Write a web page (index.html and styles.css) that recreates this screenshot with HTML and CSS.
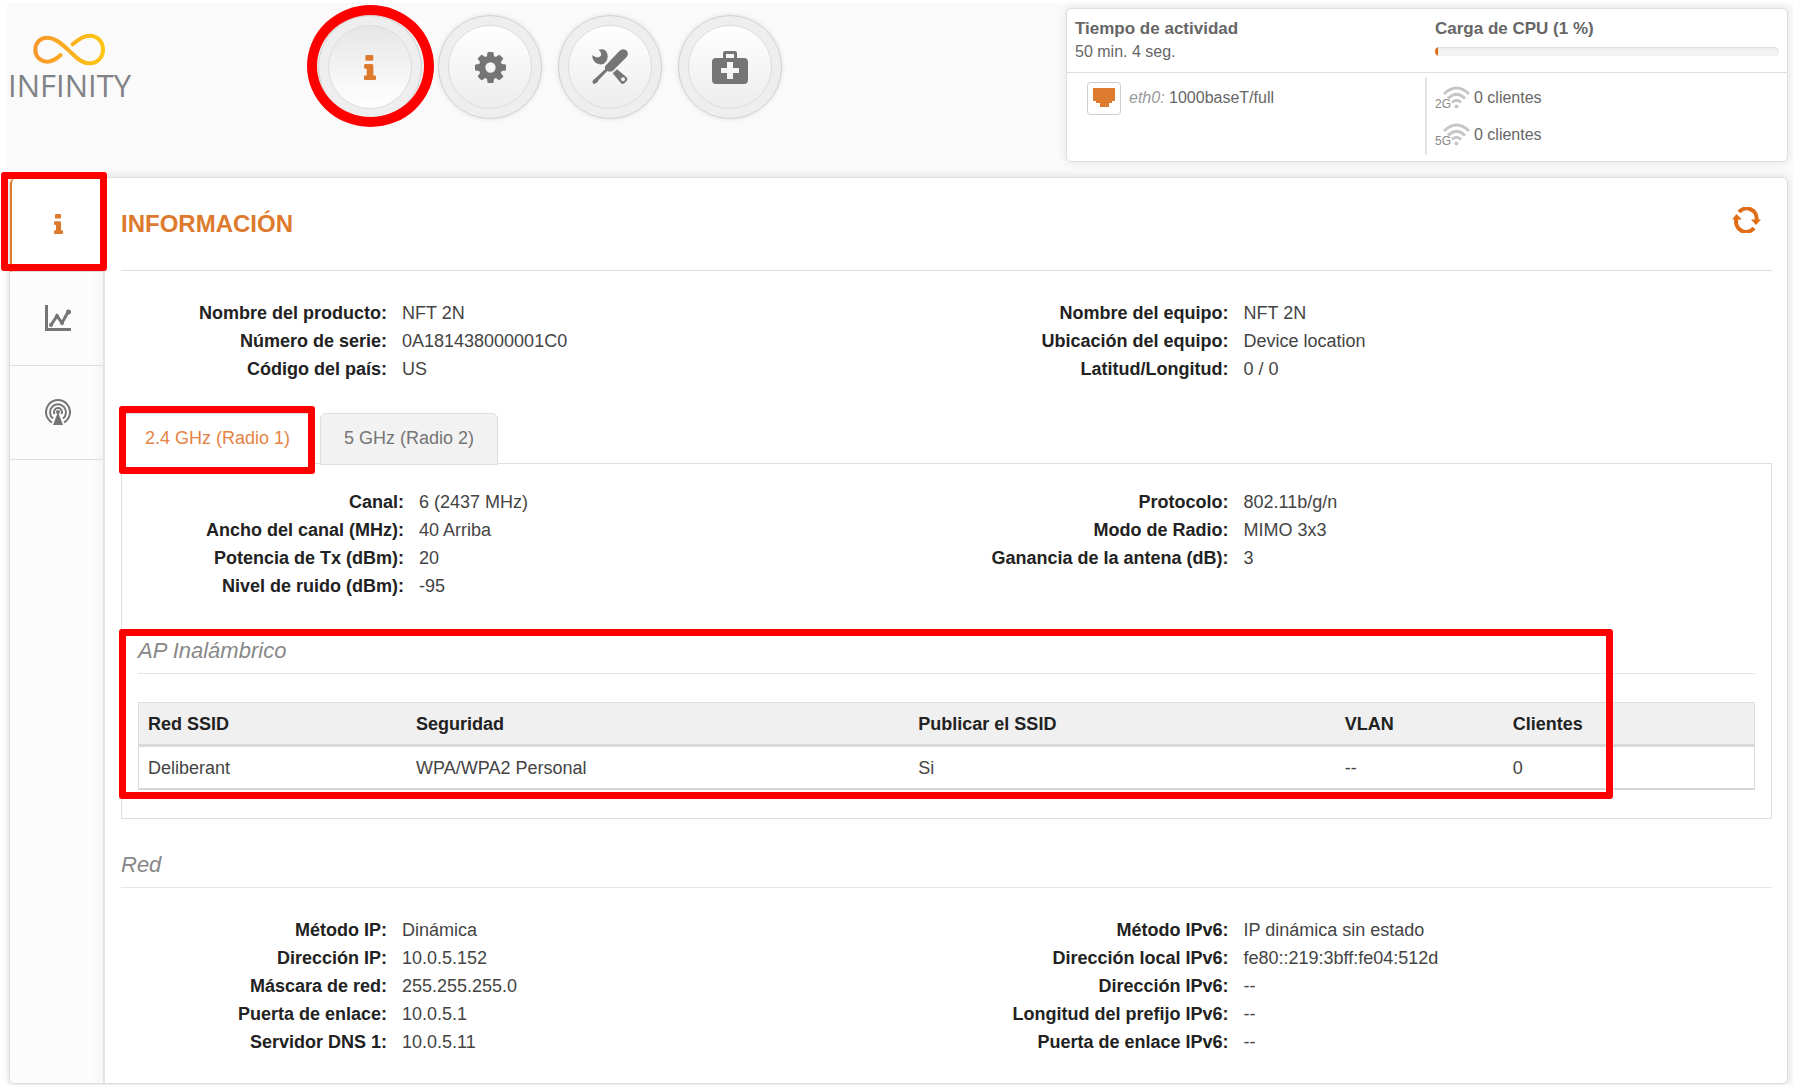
FILE: index.html
```html
<!DOCTYPE html>
<html lang="es">
<head>
<meta charset="utf-8">
<title>Infinity - Información</title>
<link rel="stylesheet" href="styles.css">
</head>
<body>
<svg class="defs" aria-hidden="true">
  <symbol id="info" viewBox="64 128 576 1408" preserveAspectRatio="none"><path d="M640 1344v128q0 26-19 45t-45 19h-448q-26 0-45-19t-19-45v-128q0-26 19-45t45-19h64v-384h-64q-26 0-45-19t-19-45v-128q0-26 19-45t45-19h320q26 0 45 19t19 45v576h64q26 0 45 19t19 45zm-128-1152v192q0 26-19 45t-45 19h-256q-26 0-45-19t-19-45v-192q0-26 19-45t45-19h256q26 0 45 19t19 45z"/></symbol>
  <symbol id="wifi" viewBox="0 0 27 23"><g fill="none" stroke="#c6c6c6" stroke-width="3"><path d="M1 8Q13.500-4 26 8"/><path d="M5 12.500Q13.500 4 22 12.500"/><path d="M9 16.500Q13.500 12 18 16.500"/></g><circle cx="13.500" cy="20.500" r="2" fill="#c6c6c6"/></symbol>
</svg>
<div class="page">
  <header class="top">
    <a class="logo" href="#" aria-label="Infinity">
      <svg width="72" height="34" viewBox="0 0 216 102" aria-hidden="true">
        <defs><linearGradient id="gold"><stop offset="0" stop-color="#f7982a"/><stop offset="1" stop-color="#fdc513"/></linearGradient></defs>
        <path d="M83 66C66 82 54 86 42 86C22 86 7 70 7 50C7 29 22 14 42 14C66 14 86 33 106 51C126 69 143 91 170 91C193 91 210 73 210 50C210 26 193 8 170 8C152 8 138 17 119 34" fill="none" stroke="url(#gold)" stroke-width="12" stroke-linecap="round"/>
      </svg>
      <span>INFINITY</span>
    </a>
    <nav class="circles" aria-label="Principal">
      <a class="circle active" href="#" aria-label="Información"><span><svg width="12" height="25"><use href="#info"/></svg></span></a>
      <a class="circle" href="#" aria-label="Configuración"><span><svg width="31" height="31" viewBox="128 128 1536 1536"><path d="M1152 896q0-106-75-181t-181-75-181 75-75 181 75 181 181 75 181-75 75-181zm512-109v222q0 12-8 23t-20 13l-185 28q-19 54-39 91 35 50 107 138 10 12 10 25t-9 23q-27 37-99 108t-94 71q-12 0-26-9l-138-108q-44 23-91 38-16 136-29 186-7 28-36 28h-222q-14 0-24.500-8.500t-11.500-21.500l-28-184q-49-16-90-37l-141 107q-10 9-25 9-14 0-25-11-126-114-165-168-7-10-7-23 0-12 8-23 15-21 51-66.500t54-70.500q-27-50-41-99l-183-27q-13-2-21-12.500t-8-23.500v-222q0-12 8-23t19-13l186-28q14-46 39-92-40-57-107-138-10-12-10-24 0-10 9-23 26-36 98.500-107.500t94.500-71.500q13 0 26 10l138 107q44-23 91-38 16-136 29-186 7-28 36-28h222q14 0 24.500 8.500t11.500 21.500l28 184q49 16 90 37l142-107q9-9 24-9 13 0 25 10 129 119 165 170 7 8 7 22 0 12-8 23-15 21-51 66.500t-54 70.500q26 50 41 98l183 28q13 2 21 12.500t8 23.500z"/></svg></span></a>
      <a class="circle" href="#" aria-label="Herramientas"><span><svg width="36" height="36" viewBox="0 0 108 108">
        <path d="M1 19L13 25Q23 27 28 18Q28 8 20 2Q40-3 46 14Q49 28 43 37L35 45Q23 49 12 42Q0 33 1 19Z"/>
        <path d="M39 52L82 6Q91-3 103 4Q112 14 104 24L62 66Q52 69 46 66L20 93Q16 103 5 105Q-1 101 3 94L12 86L39 61Z"/>
        <path fill-rule="evenodd" d="M62 73L75 61L103 84Q109 89 103 97L97 103Q91 107 86 101ZM87 91A6 6 0 1 0 99 91A6 6 0 1 0 87 91Z"/>
      </svg></span></a>
      <a class="circle" href="#" aria-label="Asistencia"><span><svg width="36" height="34" viewBox="0 0 36 34"><path fill-rule="evenodd" d="M11 8V3Q11 1 13 1H23Q25 1 25 3V8H32Q36 8 36 12V30Q36 34 32 34H4Q0 34 0 30V12Q0 8 4 8ZM14 8H22V4H14ZM15 12V18H9V23H15V29H21V23H27V18H21V12Z"/></svg></span></a>
    </nav>
    <section class="status" aria-label="Estado">
      <div class="status-row">
        <div><b>Tiempo de actividad</b><p>50 min. 4 seg.</p></div>
        <div><b>Carga de CPU (1 %)</b><div class="bar"><i style="width:1%"></i></div></div>
      </div>
      <div class="status-row links">
        <div class="eth">
          <svg width="34" height="33" viewBox="0 0 34 33" aria-hidden="true"><rect x=".5" y=".5" width="33" height="32" rx="3" fill="#fff" stroke="#ccc"/><path d="M6 6H28V19H25V21H22V25H13V21H9V19H6Z" fill="#dd7a2e"/></svg>
          <p><em>eth0:</em> 1000baseT/full</p>
        </div>
        <div class="clients">
          <p><span class="band"><svg width="27" height="23" aria-hidden="true"><use href="#wifi"/></svg><small>2G</small></span>0 clientes</p>
          <p><span class="band"><svg width="27" height="23" aria-hidden="true"><use href="#wifi"/></svg><small>5G</small></span>0 clientes</p>
        </div>
      </div>
    </section>
  </header>

  <div class="panel">
    <nav class="side" aria-label="Secciones">
      <a class="active" href="#" aria-label="Información"><svg width="9" height="20"><use href="#info"/></svg></a>
      <a href="#" aria-label="Estadísticas"><svg width="26" height="26" viewBox="0 0 26 26"><path d="M1.500 0V24.500H26" fill="none" stroke="#757575" stroke-width="3"/><path d="M6 20L12 11L17 18L23 7" fill="none" stroke="#757575" stroke-width="3"/><circle cx="6" cy="20" r="2"/><circle cx="12" cy="11" r="2"/><circle cx="17" cy="18" r="2"/><circle cx="23.500" cy="7" r="2.500"/></svg></a>
      <a href="#" aria-label="Inalámbrico"><svg width="26" height="26" viewBox="0 0 26 26"><g fill="none" stroke="#757575" stroke-width="2"><path d="M7 23.500A12 12 0 1 1 19 23.500"/><path d="M8 19.500A8 8 0 1 1 18 19.500"/><path d="M9.500 15A4 4 0 1 1 16.500 15"/></g><circle cx="13" cy="13" r="2"/><path d="M13 13L18 26H8Z"/></svg></a>
    </nav>
    <main class="content">
      <div class="title">
        <h1>INFORMACIÓN</h1>
        <button class="refresh" type="button" aria-label="Actualizar"><svg width="29" height="26" viewBox="0 0 29 26"><g fill="none" stroke="#df6d16" stroke-width="4"><path d="M7 5A10 10 0 0 1 24.500 13"/><path d="M22 21A10 10 0 0 1 4.500 12"/></g><path d="M19 12.500H29L24 18ZM0 12.500H10L4.500 7Z" fill="#df6d16"/></svg></button>
      </div>
      <div class="facts">
        <dl><dt>Nombre del producto:</dt><dd>NFT 2N</dd><dt>Número de serie:</dt><dd>0A181438000001C0</dd><dt>Código del país:</dt><dd>US</dd></dl>
        <dl><dt>Nombre del equipo:</dt><dd>NFT 2N</dd><dt>Ubicación del equipo:</dt><dd>Device location</dd><dt>Latitud/Longitud:</dt><dd>0 / 0</dd></dl>
      </div>
      <div class="tabs">
        <button class="active" type="button">2.4 GHz (Radio 1)</button>
        <button type="button">5 GHz (Radio 2)</button>
      </div>
      <section class="radio">
        <div class="facts">
          <dl><dt>Canal:</dt><dd>6 (2437 MHz)</dd><dt>Ancho del canal (MHz):</dt><dd>40 Arriba</dd><dt>Potencia de Tx (dBm):</dt><dd>20</dd><dt>Nivel de ruido (dBm):</dt><dd>-95</dd></dl>
          <dl><dt>Protocolo:</dt><dd>802.11b/g/n</dd><dt>Modo de Radio:</dt><dd>MIMO 3x3</dd><dt>Ganancia de la antena (dB):</dt><dd>3</dd></dl>
        </div>
        <div class="ap">
          <h2>AP Inalámbrico</h2>
          <table>
            <colgroup><col class="c-ssid"><col class="c-sec"><col class="c-pub"><col class="c-vlan"><col></colgroup>
            <thead><tr><th>Red SSID</th><th>Seguridad</th><th>Publicar el SSID</th><th>VLAN</th><th>Clientes</th></tr></thead>
            <tbody><tr><td>Deliberant</td><td>WPA/WPA2 Personal</td><td>Si</td><td>--</td><td>0</td></tr></tbody>
          </table>
        </div>
      </section>
      <section class="net">
        <h2>Red</h2>
        <div class="facts">
          <dl><dt>Método IP:</dt><dd>Dinámica</dd><dt>Dirección IP:</dt><dd>10.0.5.152</dd><dt>Máscara de red:</dt><dd>255.255.255.0</dd><dt>Puerta de enlace:</dt><dd>10.0.5.1</dd><dt>Servidor DNS 1:</dt><dd>10.0.5.11</dd></dl>
          <dl><dt>Método IPv6:</dt><dd>IP dinámica sin estado</dd><dt>Dirección local IPv6:</dt><dd>fe80::219:3bff:fe04:512d</dd><dt>Dirección IPv6:</dt><dd>--</dd><dt>Longitud del prefijo IPv6:</dt><dd>--</dd><dt>Puerta de enlace IPv6:</dt><dd>--</dd></dl>
        </div>
      </section>
    </main>
  </div>
</div>
</body>
</html>
```
FILE: styles.css
```css
* { box-sizing: border-box; }
body {
  margin: 0;
  background: #fff;
  color: #444;
  font: 18px/28px "Liberation Sans", Arial, sans-serif;
}
h1, h2, p, dl, dd { margin: 0; }
a { color: inherit; text-decoration: none; }
svg { display: block; fill: currentColor; }
.defs { position: absolute; width: 0; height: 0; }
.page {
  margin: 3px 0 0 7px;
  padding: 5px 5px 2px 1px;
  background: #fafafa;
}

/* Header */
.top { display: flex; align-items: flex-start; margin-bottom: 15px; }
.logo { flex: 0 0 310px; padding: 25px 0 0; color: #808285; }
.logo svg { margin-left: 25px; }
.logo span { display: block; font: 31px/36px "Open Sans", sans-serif; }
.circles { display: flex; flex: 1; gap: 16px; padding-top: 7px; }
.circle {
  position: relative;
  display: flex;
  width: 104px;
  height: 104px;
  padding: 9px;
  border: 1px solid #d2d2d2;
  border-radius: 50%;
  background: #eee;
  color: #757575;
  box-shadow: 0 0 5px rgba(0, 0, 0, .1);
}
.circle span {
  display: flex;
  flex: 1;
  align-items: center;
  justify-content: center;
  border: 1px solid #ddd;
  border-radius: 50%;
  background: linear-gradient(#fff, #ededed);
}
.circle.active { color: #dd7a2e; }
.circle.active span { background: linear-gradient(#e6e6e6, #fff); }

/* Red callouts laid over the highlighted controls */
.circle.active::after, .side .active::after, .tabs .active::after, .ap::after {
  content: "";
  position: absolute;
  z-index: 2;
  border: 7px solid #f00;
  border-radius: 3px;
  pointer-events: none;
}
.circle.active::after { inset: -11px -13px -9px -12px; border-width: 10px; border-radius: 50%; }
.side .active::after { inset: -6px -4px 0 -11px; }
.tabs .active::after { inset: -8px -2px -10px -3px; }
.ap::after { inset: -8px 142px -9px -19px; }

.status {
  width: 722px;
  border: 1px solid #dedede;
  border-radius: 5px;
  background: #fff;
  box-shadow: 0 0 10px rgba(0, 0, 0, .1);
  color: #666;
  font-size: 16px;
  line-height: 23px;
}
.status-row { display: grid; grid-template-columns: 1fr 1fr; }
.status-row > div { padding: 8px 8px 9px; }
.status-row b { display: block; font-size: 17px; }
.links { border-top: 1px solid #dedede; }
.bar {
  height: 9px;
  margin-top: 7px;
  overflow: hidden;
  border-radius: 5px;
  background: #f2f2f2;
  box-shadow: inset 0 1px 2px rgba(0, 0, 0, .1);
}
.bar i { display: block; height: 9px; background: #df6d16; }
.links .eth { display: flex; gap: 8px; padding: 9px 20px; }
.eth p { line-height: 32px; }
.eth em { color: #999; }
.links .clients { margin: 4px 0 6px -2px; padding: 2px 8px; border-left: 2px solid #e3e3e3; }
.clients p { display: flex; align-items: center; height: 37px; }
.band { position: relative; padding: 0 4px 0 8px; }
.band small { position: absolute; left: 0; bottom: -1px; color: #888; font-size: 12px; line-height: 12px; }

/* Main panel */
.panel {
  display: flex;
  margin-left: 1px;
  border: 1px solid #dedede;
  border-radius: 6px;
  background: #fff;
  box-shadow: 0 0 10px rgba(0, 0, 0, .12);
}
.side {
  flex: 0 0 95px;
  border-right: 2px solid #e3e3e3;
  border-radius: 6px 0 0 6px;
  background: linear-gradient(90deg, #fcfcfc 88%, #f6f6f6);
  color: #757575;
}
.side a {
  position: relative;
  display: flex;
  align-items: center;
  justify-content: center;
  height: 94px;
  padding: 0 0 2px 2px;
  border-bottom: 1px solid #dedede;
}
.side .active { border-left: 2px solid #dd7a2e; border-top-left-radius: 6px; background: #fff; color: #dd7a2e; }
.content { flex: 1; min-width: 0; padding: 0 15px 27px 16px; }
.title {
  display: flex;
  align-items: center;
  justify-content: space-between;
  height: 93px;
  border-bottom: 1px solid #dedede;
}
h1 { color: #dd7a2e; font-size: 24px; }
.refresh { padding: 0 11px 8px; border: 0; background: none; }
.facts { display: grid; grid-template-columns: 1fr 1fr; padding-top: 28px; }
.facts dl { display: grid; grid-template-columns: 266px 1fr; align-content: start; column-gap: 15px; }
.facts dl + dl { padding-left: 16px; }
dt { color: #222; font-weight: bold; text-align: right; white-space: nowrap; }
.tabs { display: flex; gap: 6px; margin: 30px 0 -2px; }
.tabs button {
  position: relative;
  height: 52px;
  padding: 0 23px 2px;
  border: 1px solid #dedede;
  border-radius: 6px 6px 0 0;
  background: #f2f2f2;
  color: #757575;
  font: 18px "Liberation Sans", Arial, sans-serif;
}
.tabs .active { border-bottom-color: #fff; background: #fff; color: #e58345; }
.radio { padding: 0 16px 28px; border: 1px solid #dedede; }
.radio .facts { padding-top: 24px; }
.ap { position: relative; margin-top: 37px; }
h2 {
  padding-bottom: 8px;
  border-bottom: 1px solid #e6e6e6;
  color: #888;
  font-size: 22px;
  font-style: italic;
  font-weight: normal;
}
table {
  width: 100%;
  margin-top: 28px;
  border: 1px solid #dedede;
  border-bottom: 2px solid #d8d8d8;
  border-spacing: 0;
  table-layout: fixed;
}
.c-ssid { width: 16.6%; }
.c-sec { width: 31.1%; }
.c-pub { width: 26.4%; }
.c-vlan { width: 10.4%; }
th, td { height: 41px; padding: 0 9px; text-align: left; }
th { height: 44px; border-bottom: 3px solid #dadada; background: #f0f0f0; color: #222; }
.net { margin-top: 32px; }
```
